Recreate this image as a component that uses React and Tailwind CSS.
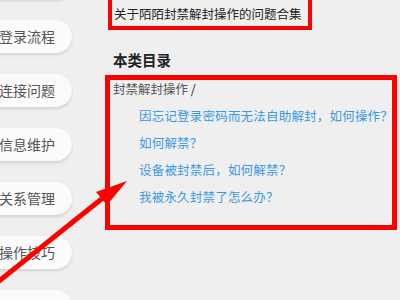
const font = { fontFamily: '"Noto Sans CJK SC", "Noto Sans", sans-serif' };

// first and last pills are scrolled off-screen, their labels are not visible
const navItems = ["", "登录流程", "连接问题", "信息维护", "关系管理", "操作技巧", ""];

const links = [
  "因忘记登录密码而无法自助解封，如何操作？",
  "如何解禁？",
  "设备被封禁后，如何解禁？",
  "我被永久封禁了怎么办？",
];

const App = () => {
  return (
    <div
      className="relative flex w-[400px] h-[300px] overflow-hidden bg-[#efefef]"
      style={font}
    >
      {/* left category pills */}
      <div className="w-[105px] shrink-0 flex flex-col gap-[21px] mt-[-34px]">
        {navItems.map((item, i) => (
          <div
            key={i}
            className="w-[90px] h-[33px] shrink-0 ml-[-18px] rounded-full bg-[#fbfbfb] shadow-[0_2px_3px_rgba(0,0,0,0.12)] flex items-center justify-end pr-[17px] text-[14px] text-[#555]"
          >
            {item}
          </div>
        ))}
      </div>

      {/* content */}
      <div className="flex flex-col">
        <div className="ml-[3px] mt-[-4px] w-[204px] h-[34px] border-4 border-[#ff0000] flex items-end pb-[4px] pl-[2px] text-[12.5px] leading-[16px] text-[#222] whitespace-nowrap">
          关于陌陌封禁解封操作的问题合集
        </div>
        <h2 className="mt-[20px] pl-[8px] text-[14.5px] leading-[20px] font-bold text-[#222]">
          本类目录
        </h2>
        <div className="mt-[5px] w-[292px] h-[155px] border-[5px] border-[#ff0000] flex flex-col">
          <div className="pl-[3px] text-[12.5px] leading-[18px] text-[#555]">
            封禁解封操作 <span className="text-[#222]">/</span>
          </div>
          <ul className="mt-[5px] pl-[29px] flex flex-col">
            {links.map((l) => (
              <li
                key={l}
                className="h-[27px] flex items-center text-[12.5px] tracking-[0.2px] text-[#3a98e6] whitespace-nowrap"
              >
                {l}
              </li>
            ))}
          </ul>
        </div>
      </div>

      {/* annotation arrow */}
      <svg
        className="absolute left-0 top-0 pointer-events-none"
        width="400"
        height="300"
        viewBox="0 0 400 300"
      >
        <line x1="-6" y1="285" x2="104" y2="197" stroke="#ff0000" strokeWidth="5" />
        <polygon points="127,181 96,192 107,205" fill="#ff0000" />
      </svg>
    </div>
  );
};

export default App;
